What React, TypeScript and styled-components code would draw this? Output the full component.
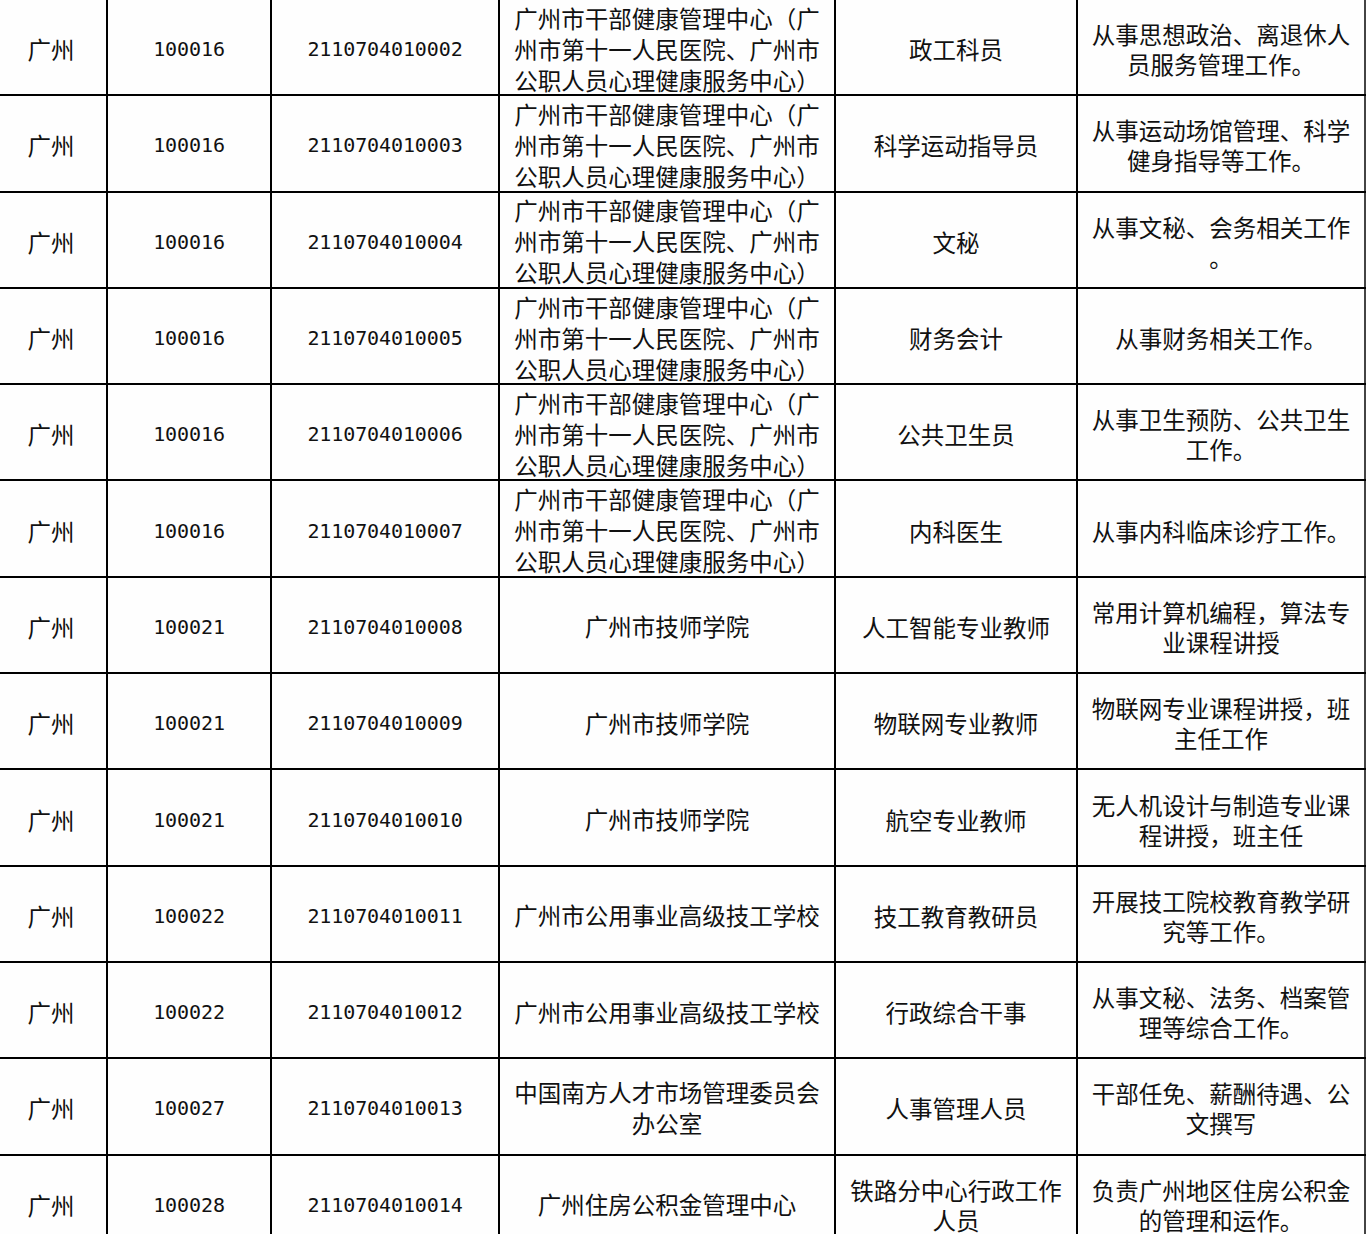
import React from 'react';
import styled, { createGlobalStyle } from 'styled-components';

const Global = createGlobalStyle`
  html, body {
    margin: 0;
    padding: 0;
    background: #ffffff;
    overflow: hidden;
  }
`;

const Table = styled.div`
  width: 1366px;
  display: flex;
  flex-direction: column;
  background: #fefefe;
  color: #111111;
`;

const Row = styled.div`
  display: flex;
  height: 96.3px;
  box-sizing: border-box;
  border-bottom: 2px solid #000000;
  flex-shrink: 0;
`;

const widths = [108, 164, 228, 336, 242, 288];

const Cell = styled.div<{ $col: number; $mono?: boolean }>`
  width: ${(p) => widths[p.$col]}px;
  flex-shrink: 0;
  box-sizing: border-box;
  border-right: 2px solid ${(p) => (p.$col === 5 ? '#444444' : '#000000')};
  padding-top: 4px;
  padding-right: ${(p) => (p.$col === 0 ? '4px' : '0')};
  display: flex;
  flex-direction: column;
  justify-content: center;
  align-items: center;
  font-family: ${(p) =>
    p.$mono
      ? '"DejaVu Sans Mono", "Liberation Mono", monospace'
      : '"Noto Sans CJK SC", "Noto Sans", sans-serif'};
  font-size: ${(p) => (p.$mono ? '20px' : '23.5px')};
  letter-spacing: ${(p) => (p.$mono ? '-0.1px' : '0')};
  --lh: ${(p) => (p.$col === 3 ? '31px' : '30px')};
  line-height: var(--lh);
`;

const Line = styled.span`
  display: block;
  height: var(--lh);
  white-space: nowrap;
`;

const ORG = ['广州市干部健康管理中心（广', '州市第十一人民医院、广州市', '公职人员心理健康服务中心）'];
const JISHI = ['广州市技师学院'];
const GONGYONG = ['广州市公用事业高级技工学校'];

type Item = {
  code: string;
  post: string;
  org: string[];
  title: string[];
  desc: string[];
};

const rows: Item[] = [
  { code: '100016', post: '2110704010002', org: ORG, title: ['政工科员'], desc: ['从事思想政治、离退休人', '员服务管理工作。'] },
  { code: '100016', post: '2110704010003', org: ORG, title: ['科学运动指导员'], desc: ['从事运动场馆管理、科学', '健身指导等工作。'] },
  { code: '100016', post: '2110704010004', org: ORG, title: ['文秘'], desc: ['从事文秘、会务相关工作', '。'] },
  { code: '100016', post: '2110704010005', org: ORG, title: ['财务会计'], desc: ['从事财务相关工作。'] },
  { code: '100016', post: '2110704010006', org: ORG, title: ['公共卫生员'], desc: ['从事卫生预防、公共卫生', '工作。'] },
  { code: '100016', post: '2110704010007', org: ORG, title: ['内科医生'], desc: ['从事内科临床诊疗工作。'] },
  { code: '100021', post: '2110704010008', org: JISHI, title: ['人工智能专业教师'], desc: ['常用计算机编程，算法专', '业课程讲授'] },
  { code: '100021', post: '2110704010009', org: JISHI, title: ['物联网专业教师'], desc: ['物联网专业课程讲授，班', '主任工作'] },
  { code: '100021', post: '2110704010010', org: JISHI, title: ['航空专业教师'], desc: ['无人机设计与制造专业课', '程讲授，班主任'] },
  { code: '100022', post: '2110704010011', org: GONGYONG, title: ['技工教育教研员'], desc: ['开展技工院校教育教学研', '究等工作。'] },
  { code: '100022', post: '2110704010012', org: GONGYONG, title: ['行政综合干事'], desc: ['从事文秘、法务、档案管', '理等综合工作。'] },
  { code: '100027', post: '2110704010013', org: ['中国南方人才市场管理委员会', '办公室'], title: ['人事管理人员'], desc: ['干部任免、薪酬待遇、公', '文撰写'] },
  { code: '100028', post: '2110704010014', org: ['广州住房公积金管理中心'], title: ['铁路分中心行政工作', '人员'], desc: ['负责广州地区住房公积金', '的管理和运作。'] },
];

const Lines = ({ lines }: { lines: string[] }) => (
  <>
    {lines.map((l, i) => (
      <Line key={i}>{l}</Line>
    ))}
  </>
);

export default function App() {
  return (
    <>
      <Global />
      <Table>
        {rows.map((r, i) => (
          <Row key={i}>
            <Cell $col={0}>广州</Cell>
            <Cell $col={1} $mono>
              {r.code}
            </Cell>
            <Cell $col={2} $mono>
              {r.post}
            </Cell>
            <Cell $col={3}>
              <Lines lines={r.org} />
            </Cell>
            <Cell $col={4}>
              <Lines lines={r.title} />
            </Cell>
            <Cell $col={5}>
              <Lines lines={r.desc} />
            </Cell>
          </Row>
        ))}
      </Table>
    </>
  );
}
